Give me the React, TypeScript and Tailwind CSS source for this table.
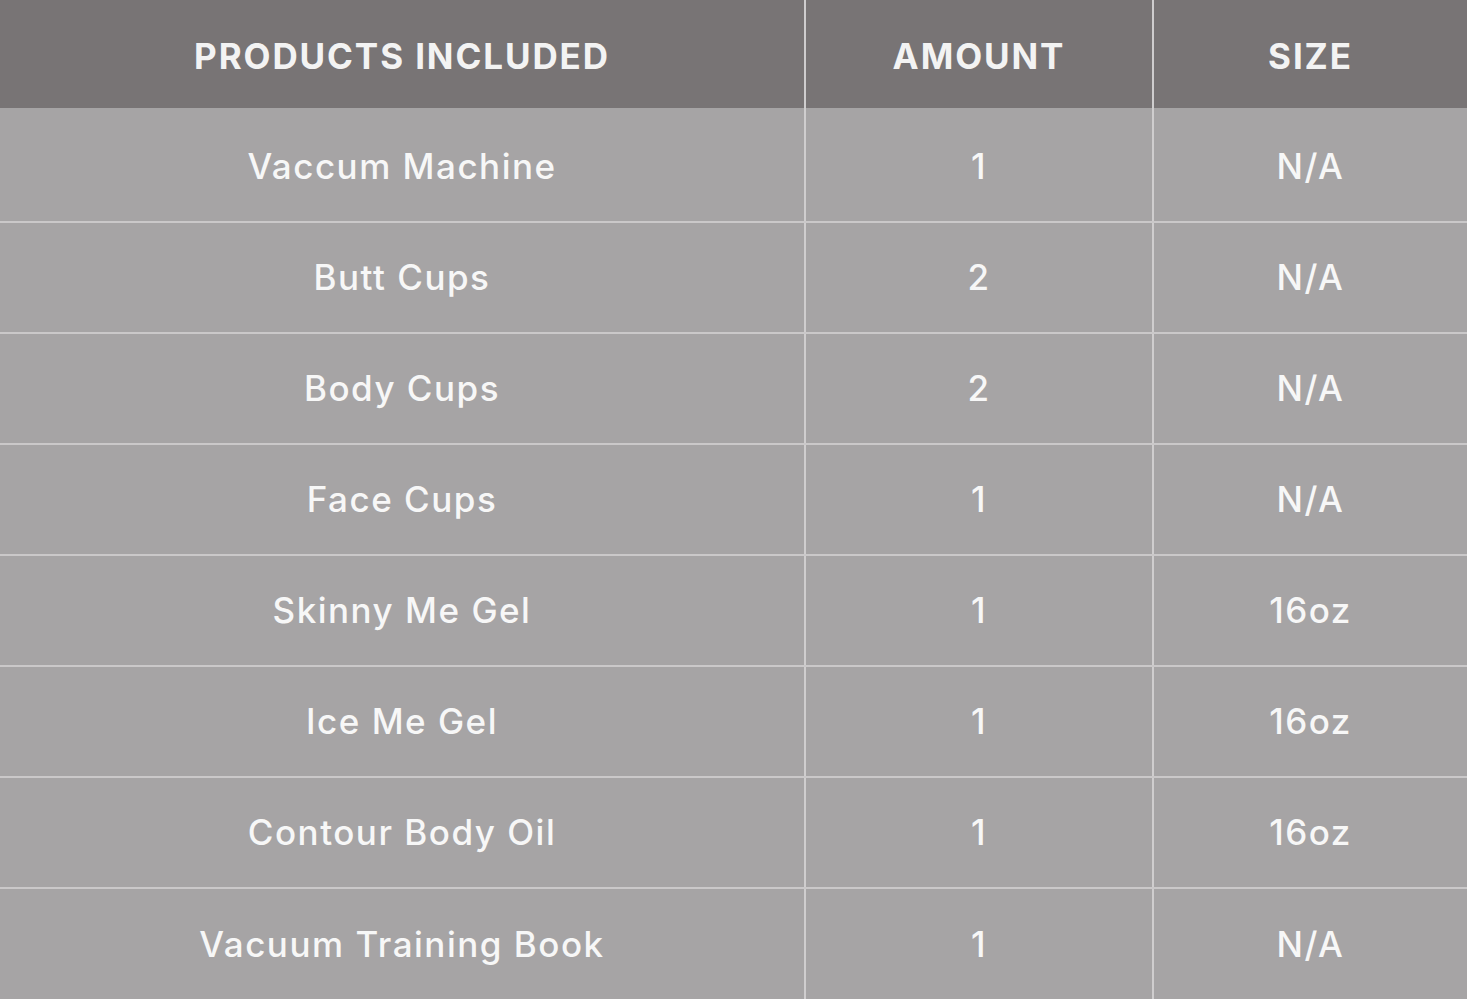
const rows = [
  { name: 'Vaccum Machine', amount: '1', size: 'N/A' },
  { name: 'Butt Cups', amount: '2', size: 'N/A' },
  { name: 'Body Cups', amount: '2', size: 'N/A' },
  { name: 'Face Cups', amount: '1', size: 'N/A' },
  { name: 'Skinny Me Gel', amount: '1', size: '16oz' },
  { name: 'Ice Me Gel', amount: '1', size: '16oz' },
  { name: 'Contour Body Oil', amount: '1', size: '16oz' },
  { name: 'Vacuum Training Book', amount: '1', size: 'N/A' },
]

export default function App() {
  return (
    <div
      className="h-[999px] w-[1467px] overflow-hidden bg-[#a6a4a5] text-[#f7f7f7]"
      style={{ fontFamily: 'Inter, "Open Sans", sans-serif' }}
    >
      <div className="grid h-[108px] grid-cols-[806px_348px_1fr] bg-[#787475] text-[35px] font-bold tracking-[1.9px] text-[#f3f3f3]">
        <div className="flex items-center justify-center border-r-2 border-[#cfcdce] pt-1">PRODUCTS INCLUDED</div>
        <div className="flex items-center justify-center border-r-2 border-[#cfcdce] pt-1">AMOUNT</div>
        <div className="flex items-center justify-center pt-1">SIZE</div>
      </div>
      {rows.map((r, i) => {
        const pad = i === 0 ? 'pt-1' : ''
        return (
          <div
            key={r.name}
            className={`grid grid-cols-[806px_348px_1fr] text-[35px] font-medium tracking-[1.5px] ${i === 0 ? 'h-[115px]' : 'h-[111px]'} ${i < rows.length - 1 ? 'border-b-2 border-[#cac8c9]' : ''}`}
          >
            <div className={`flex items-center justify-center border-r-2 border-[#cfcdce] ${pad}`}>{r.name}</div>
            <div className={`flex items-center justify-center border-r-2 border-[#cfcdce] ${pad}`}>{r.amount}</div>
            <div className={`flex items-center justify-center ${pad}`}>{r.size}</div>
          </div>
        )
      })}
    </div>
  )
}
